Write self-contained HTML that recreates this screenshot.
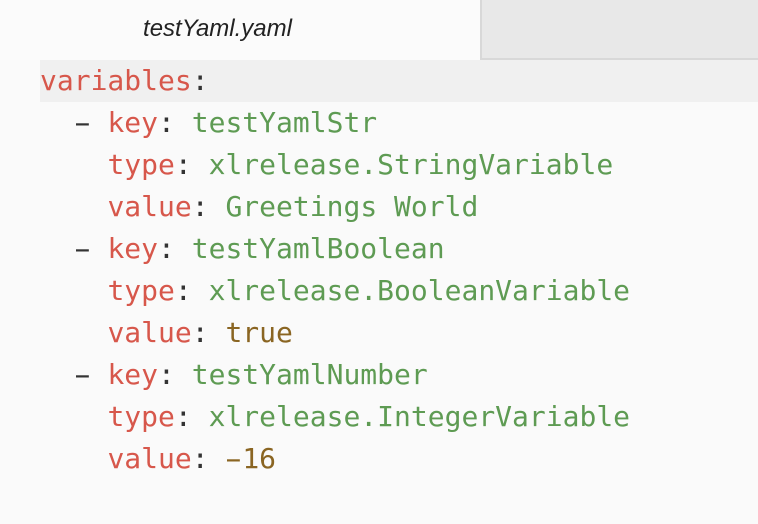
<!DOCTYPE html>
<html><head><style>
html,body{margin:0;padding:0}
body{width:758px;height:524px;background:#fafafa;position:relative;overflow:hidden}
.tab{position:absolute;left:0;top:0;width:480px;height:60px;background:#fbfbfb}
.tabt{position:absolute;left:0;width:435px;top:15px;text-align:center;font:italic 24px "Liberation Sans",sans-serif;color:#222}
.rest{position:absolute;left:480px;top:0;width:278px;height:58px;background:#e8e8e8;border-left:2px solid #d8d8d8;border-bottom:2px solid #d8d8d8}
.hl{position:absolute;left:40px;top:60px;width:718px;height:42px;background:#f0f0f0}
pre{position:absolute;left:40px;top:60px;margin:0;font:28px/42px "DejaVu Sans Mono",monospace;color:#333}
.k{color:#d7574b}.s{color:#5e9b53}.n{color:#8a6522}
.d{display:inline-block;width:16.86px;text-align:center;transform:scaleX(1.8)}
</style></head><body>
<div class="tab"><div class="tabt">testYaml.yaml</div></div>
<div class="rest"></div>
<div class="hl"></div>
<pre><span class="k">variables</span>:
  <span class="d">-</span> <span class="k">key</span>: <span class="s">testYamlStr</span>
    <span class="k">type</span>: <span class="s">xlrelease.StringVariable</span>
    <span class="k">value</span>: <span class="s">Greetings World</span>
  <span class="d">-</span> <span class="k">key</span>: <span class="s">testYamlBoolean</span>
    <span class="k">type</span>: <span class="s">xlrelease.BooleanVariable</span>
    <span class="k">value</span>: <span class="n">true</span>
  <span class="d">-</span> <span class="k">key</span>: <span class="s">testYamlNumber</span>
    <span class="k">type</span>: <span class="s">xlrelease.IntegerVariable</span>
    <span class="k">value</span>: <span class="n"><span class="d">-</span>16</span></pre>
</body></html>
